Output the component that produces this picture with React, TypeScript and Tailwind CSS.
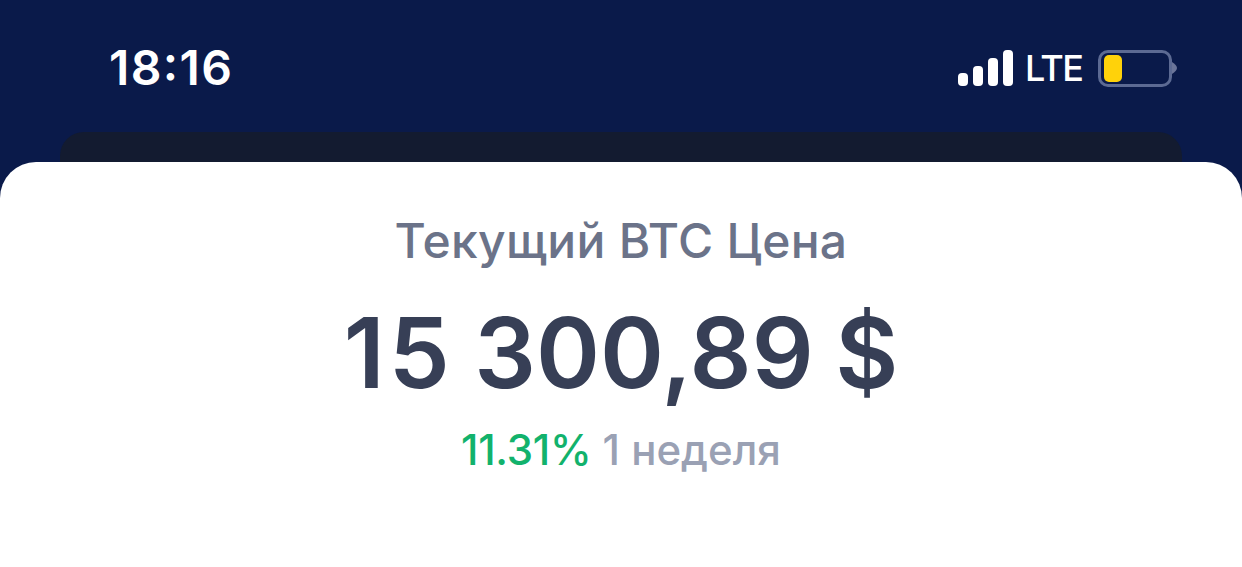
import React from 'react';

const App: React.FC = () => {
  return (
    <div className="relative w-[1242px] h-[567px] overflow-hidden bg-[#0a1a4a] font-['Inter',sans-serif]">
      {/* Status bar */}
      <div className="h-[132px] flex items-start justify-between pl-[109px] pr-[65px] pt-[41px]">
        <span className="text-[48px] leading-[54px] font-semibold text-white tracking-[1.4px] [font-feature-settings:'case']">18:16</span>
        <div className="flex items-center h-[54px]">
          <svg width="55" height="36" viewBox="0 0 55 36" className="mt-[-1px]">
            <rect x="0" y="23" width="10" height="13" rx="4" fill="#fff" />
            <rect x="15" y="16" width="10" height="20" rx="4" fill="#fff" />
            <rect x="30" y="8" width="10" height="28" rx="4" fill="#fff" />
            <rect x="45" y="0" width="10" height="36" rx="4" fill="#fff" />
          </svg>
          <span className="ml-[12px] w-[58px] text-[36px] leading-[36px] font-medium text-white tracking-[-1.6px]">LTE</span>
          <div className="flex items-center ml-[15px]">
            <div className="w-[74px] h-[37px] rounded-[10px] border-[3px] border-[#5c6a93] px-[3px] py-[2px]">
              <div className="w-[18px] h-full rounded-[5px] bg-[#ffd20a]" />
            </div>
            <svg width="5" height="12" viewBox="0 0 5 12">
              <path d="M0 0 C3 2 5 4 5 6 C5 8 3 10 0 12 Z" fill="#6b7599" />
            </svg>
          </div>
        </div>
      </div>

      {/* Card behind */}
      <div className="mx-[60px] h-[60px] rounded-t-[24px] bg-[#131b30]" />

      {/* Main sheet */}
      <div className="absolute left-0 right-0 top-[162px] bottom-0 rounded-t-[36px] bg-white flex flex-col items-center">
        <div className="mt-[51px] text-[48px] leading-[56px] font-medium text-[#6b7389] tracking-[0.3px]">Текущий BTC Цена</div>
        <div className="mt-[30px] text-[97px] leading-[108px] font-semibold text-[#373f56]">
          <span className="tracking-[4px]">1</span>5 300,89
          <span className="ml-[-3px]"> $</span>
        </div>
        <div className="mt-[18px] text-[42px] leading-[50px] font-medium">
          <span className="text-[#12b26c] tracking-[-0.3px]">11.31%</span>
          <span className="text-[#9aa1b4]"> 1 неделя</span>
        </div>
      </div>
    </div>
  );
};

export default App;
